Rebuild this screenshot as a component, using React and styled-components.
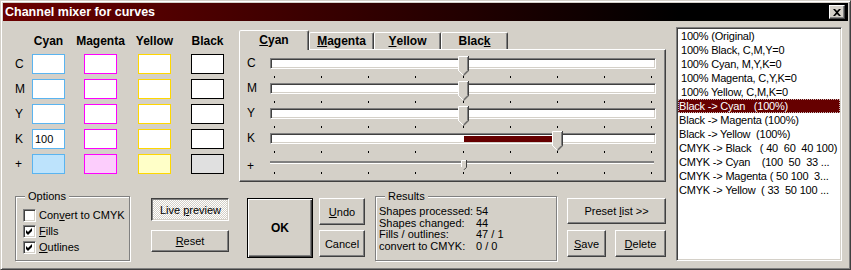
import React from "react";
import styled, { createGlobalStyle, css } from "styled-components";

const GlobalStyle = createGlobalStyle`
  html, body { margin: 0; padding: 0; background: #d4d0c8; }
  body {
    font-family: "Liberation Sans", Arial, sans-serif;
    font-size: 11px;
    color: #000;
  }
  * { box-sizing: border-box; }
`;

const raised = css`
  border: 1px solid;
  border-color: #fff #404040 #404040 #fff;
  box-shadow: inset -1px -1px #808080;
`;

const sunken = css`
  border: 1px solid;
  border-color: #808080 #fff #fff #808080;
  box-shadow: inset 1px 1px #404040, inset -1px -1px #d4d0c8;
`;

const Window = styled.div`
  width: 851px;
  height: 270px;
  background: #d4d0c8;
  border: 1px solid;
  border-color: #d4d0c8 #404040 #404040 #d4d0c8;
  box-shadow: inset 1px 1px #fff, inset -1px -1px #808080;
  padding: 2px;
  display: flex;
  flex-direction: column;
`;

const TitleBar = styled.div`
  height: 18px;
  flex: none;
  display: flex;
  align-items: center;
  justify-content: space-between;
  padding: 0 3px 0 2px;
  background: linear-gradient(to right, #6b0000, #000 80%);
  color: #fff;
  font-weight: bold;
  font-size: 12.5px;
`;

const CloseButton = styled.div`
  ${raised};
  width: 16px;
  height: 14px;
  background: #d4d0c8;
  display: flex;
  align-items: center;
  justify-content: center;
`;

const Body = styled.div`
  flex: 1;
  display: flex;
`;

const LeftPane = styled.div`
  width: 673px;
  display: flex;
  flex-direction: column;
`;

const TopRow = styled.div`
  height: 162px;
  display: flex;
  align-items: flex-start;
`;

/* ---------- mixer grid ---------- */

const MixerGrid = styled.div`
  margin: 10px 0 0 12px;
  display: grid;
  grid-template-columns: 17px 52px 54px 53px 33px;
  grid-template-rows: 23px repeat(5, 25px);
  align-items: start;
`;

const ColHead = styled.div`
  width: 33px;
  display: flex;
  justify-content: center;
  white-space: nowrap;
  font-weight: bold;
  font-size: 12px;
  line-height: 20px;
`;

const RowLabel = styled.div`
  font-size: 12px;
  line-height: 20px;
`;

const ColorBox = styled.div`
  width: 33px;
  height: 20px;
  border: 1px solid ${(p) => p.$border};
  background: ${(p) => p.$fill || "#fff"};
  padding-left: 2px;
  line-height: 18px;
  font-size: 11px;
`;

/* ---------- tabs & sliders ---------- */

const TabArea = styled.div`
  margin: 9px 0 0 15px;
  display: flex;
  flex-direction: column;
`;

const TabStrip = styled.div`
  height: 19px;
  display: flex;
  align-items: flex-end;
`;

const Tab = styled.div`
  width: ${(p) => p.$w}px;
  height: ${(p) => (p.$active ? 20 : 17)}px;
  margin-bottom: ${(p) => (p.$active ? -1 : 0)}px;
  position: relative;
  z-index: ${(p) => (p.$active ? 1 : 0)};
  background: #d4d0c8;
  border: 1px solid;
  border-bottom: none;
  border-color: #fff #404040 transparent #fff;
  border-radius: 2px 2px 0 0;
  box-shadow: inset -1px 0 #808080;
  display: flex;
  justify-content: center;
  padding-top: ${(p) => (p.$active ? 2 : 1)}px;
  font-weight: bold;
  font-size: 12px;
  line-height: 14px;
`;

const TabPanel = styled.div`
  ${raised};
  width: 427px;
  height: 133px;
  padding: 8px 9px 0 7px;
`;

const SliderRow = styled.div`
  height: 25px;
  display: flex;
  align-items: flex-start;
`;

const SliderLabel = styled.div`
  width: 23px;
  font-size: 12px;
  line-height: ${(p) => (p.$thin ? 17 : 11)}px;
`;

const SliderBody = styled.div`
  position: relative;
  width: 386px;
  height: 25px;
`;

const Track = styled.div`
  ${sunken};
  height: 11px;
  background: #fff;
`;

const ThinTrack = styled.div`
  margin-top: 3px;
  width: 384px;
  height: 3px;
  background: #808080;
  border-bottom: 1px solid #fff;
`;

const Ticks = styled.div`
  display: flex;
  justify-content: space-between;
  padding: 0 4px;
  margin-top: ${(p) => (p.$thin ? 8 : 7)}px;
`;

const Tick = styled.span`
  width: 1px;
  height: 2px;
  background: #000;
`;

const Fill = styled.div`
  position: absolute;
  top: 3px;
  height: 6px;
  background: #660000;
`;

const Thumb = styled.svg`
  position: absolute;
  top: ${(p) => (p.$thin ? 2 : -2)}px;
`;

/* ---------- bottom ---------- */

const BottomRow = styled.div`
  display: flex;
  align-items: flex-start;
`;

const GroupBox = styled.div`
  position: relative;
  margin: 13px 0 0 ${(p) => p.$ml}px;
  width: ${(p) => p.$w}px;
  height: 65px;
  border: 1px solid #808080;
  box-shadow: inset 1px 1px #fff, 1px 1px #fff;
  padding: ${(p) => p.$pad};
`;

const Legend = styled.span`
  position: absolute;
  top: -7px;
  left: 9px;
  padding: 0 3px;
  background: #d4d0c8;
  line-height: 13px;
`;

const CheckRow = styled.label`
  height: 16px;
  display: flex;
  align-items: flex-start;
  gap: 3px;
  line-height: 13px;
`;

const CheckBox = styled.span`
  ${sunken};
  width: 13px;
  height: 13px;
  background: #fff;
  display: flex;
  align-items: center;
  justify-content: center;
`;

const ButtonCol = styled.div`
  margin: 15px 0 0 ${(p) => p.$ml}px;
  width: ${(p) => p.$w}px;
  display: flex;
  flex-direction: column;
  gap: ${(p) => p.$gap}px;
`;

const Button = styled.div`
  width: ${(p) => (p.$w ? `${p.$w}px` : "100%")};
  height: ${(p) => p.$h}px;
  background: #d4d0c8;
  ${raised};
  display: flex;
  align-items: center;
  justify-content: center;
  font-size: 11px;
  white-space: pre;

  ${(p) =>
    p.$default &&
    css`
      border: 1px solid #000;
      box-shadow: inset 1px 1px #fff, inset -1px -1px #404040, inset -2px -2px #808080;
      font-weight: bold;
      font-size: 12px;
    `}

  ${(p) =>
    p.$pressed &&
    css`
      border-color: #404040 #fff #fff #404040;
      box-shadow: inset 1px 1px #808080, inset -1px -1px #d4d0c8;
      background: repeating-conic-gradient(#fff 0 25%, #d4d0c8 0 50%) 0 0 / 2px 2px;
      padding: 1px 0 0 1px;
    `}
`;

const BigButton = styled(Button)`
  margin: 15px 0 0 18px;
`;

const ButtonRow = styled.div`
  display: flex;
  justify-content: space-between;
`;

const ResultGrid = styled.div`
  display: grid;
  grid-template-columns: 97px auto;
  line-height: 11.7px;
  white-space: pre;
`;

const ListBox = styled.div`
  ${sunken};
  margin-top: 6px;
  width: 166px;
  height: 234px;
  background: #fff;
  padding: 1px;
  overflow: hidden;
`;

const ListItem = styled.div`
  height: 14px;
  line-height: 14px;
  padding-left: ${(p) => (p.$late ? 1 : 3)}px;
  letter-spacing: -0.2px;
  white-space: pre;
  overflow: hidden;
  ${(p) =>
    p.$active &&
    css`
      background: #660000;
      color: #fff;
      outline: 1px dotted #c8b8b8;
      outline-offset: -1px;
    `}
`;

const U = styled.span`
  text-decoration: underline;
`;

/* ---------- data ---------- */

const columns = [
  { name: "Cyan", border: "#5ab4f0", fill: "#bde3fc" },
  { name: "Magenta", border: "#ff00ff", fill: "#fccdfc" },
  { name: "Yellow", border: "#ffd800", fill: "#ffffc8" },
  { name: "Black", border: "#000", fill: "#e0e0e0" },
];

const rows = ["C", "M", "Y", "K"];

const tabs = [
  { key: "C", rest: "yan", w: 70, active: true },
  { key: "M", rest: "agenta", w: 65 },
  { key: "Y", rest: "ellow", w: 67 },
  { pre: "Blac", key: "k", rest: "", w: 67 },
];

const sliders = [
  { label: "C", value: 0 },
  { label: "M", value: 0 },
  { label: "Y", value: 0 },
  { label: "K", value: 50 },
  { label: "+", value: 0, thin: true },
];

const presets = [
  "100% (Original)",
  "100% Black, C,M,Y=0",
  "100% Cyan, M,Y,K=0",
  "100% Magenta, C,Y,K=0",
  "100% Yellow, C,M,K=0",
  "Black -> Cyan   (100%)",
  "Black -> Magenta (100%)",
  "Black -> Yellow  (100%)",
  "CMYK -> Black   ( 40  60  40 100)",
  "CMYK -> Cyan    (100  50  33 ...",
  "CMYK -> Magenta ( 50 100  3...",
  "CMYK -> Yellow  ( 33  50 100 ...",
];

const results = [
  ["Shapes processed:", "54"],
  ["Shapes changed:", "44"],
  ["Fills / outlines:", "47 / 1"],
  ["convert to CMYK:", "0 / 0"],
];

const pos = (v) => Math.round(4 + ((v + 100) / 200) * 377);

const BigThumb = ({ x }) => (
  <Thumb width="11" height="20" viewBox="0 0 11 20" style={{ left: x - 5 }}>
    <polygon points="0,0 11,0 11,15 5.5,20 0,15" fill="#d4d0c8" />
    <path d="M0.5 15 V0.5 H10" stroke="#fff" fill="none" />
    <path d="M0.5 14.5 L5.5 19.5" stroke="#fff" fill="none" />
    <path d="M10.5 0 V14.8 L5.5 19.8" stroke="#404040" fill="none" />
    <path d="M9.5 1 V14.4 L5.5 18.4" stroke="#808080" fill="none" />
  </Thumb>
);

const SmallThumb = ({ x }) => (
  <Thumb $thin width="6" height="10" viewBox="0 0 6 10" style={{ left: x - 2 }}>
    <polygon points="0,0 6,0 6,7 3,10 0,7" fill="#d4d0c8" />
    <path d="M0.5 7 V0.5 H5" stroke="#fff" fill="none" />
    <path d="M5.5 0 V7.3 L3 9.8" stroke="#404040" fill="none" />
  </Thumb>
);

const Check = ({ on }) => (
  <CheckBox>
    {on && (
      <svg width="7" height="7" viewBox="0 0 7 7">
        <path d="M0 2 L2 4 L6 0 V3 L2 7 L0 5 Z" fill="#000" />
      </svg>
    )}
  </CheckBox>
);

export default function App() {
  return (
    <>
      <GlobalStyle />
      <Window>
        <TitleBar>
          <span>Channel mixer for curves</span>
          <CloseButton>
            <svg width="8" height="7" viewBox="0 0 8 7">
              <path d="M0 0 H2 L4 2 L6 0 H8 L5 3.5 L8 7 H6 L4 5 L2 7 H0 L3 3.5 Z" fill="#000" />
            </svg>
          </CloseButton>
        </TitleBar>

        <Body>
          <LeftPane>
            <TopRow>
              <MixerGrid>
                <span />
                {columns.map((c) => (
                  <ColHead key={c.name}>{c.name}</ColHead>
                ))}
                {rows.map((r) => (
                  <React.Fragment key={r}>
                    <RowLabel>{r}</RowLabel>
                    {columns.map((c) => (
                      <ColorBox key={c.name} $border={c.border}>
                        {r === "K" && c.name === "Cyan" ? "100" : ""}
                      </ColorBox>
                    ))}
                  </React.Fragment>
                ))}
                <RowLabel>+</RowLabel>
                {columns.map((c) => (
                  <ColorBox key={c.name} $border={c.border} $fill={c.fill} />
                ))}
              </MixerGrid>

              <TabArea>
                <TabStrip>
                  {tabs.map((t) => (
                    <Tab key={t.key} $w={t.w} $active={t.active}>
                      {t.pre}
                      <U>{t.key}</U>
                      {t.rest}
                    </Tab>
                  ))}
                </TabStrip>
                <TabPanel>
                  {sliders.map((s) => {
                    const x = pos(s.value);
                    const zero = pos(0);
                    return (
                      <SliderRow key={s.label}>
                        <SliderLabel $thin={s.thin}>{s.label}</SliderLabel>
                        <SliderBody>
                          {s.thin ? <ThinTrack /> : <Track />}
                          <Ticks $thin={s.thin}>
                            {Array.from({ length: 9 }).map((_, i) => (
                              <Tick key={i} />
                            ))}
                          </Ticks>
                          {s.value > 0 && (
                            <Fill style={{ left: zero + 1, width: x - 5 - zero - 1 }} />
                          )}
                          {s.thin ? <SmallThumb x={x} /> : <BigThumb x={x} />}
                        </SliderBody>
                      </SliderRow>
                    );
                  })}
                </TabPanel>
              </TabArea>
            </TopRow>

            <BottomRow>
              <GroupBox $ml={12} $w={115} $pad="12px 0 0 7px">
                <Legend>Options</Legend>
                <CheckRow>
                  <Check />
                  <span>
                    Con<U>v</U>ert to CMYK
                  </span>
                </CheckRow>
                <CheckRow>
                  <Check on />
                  <span>
                    <U>F</U>ills
                  </span>
                </CheckRow>
                <CheckRow>
                  <Check on />
                  <span>
                    <U>O</U>utlines
                  </span>
                </CheckRow>
              </GroupBox>

              <ButtonCol $ml={21} $w={78} $gap={9}>
                <Button $h={23} $pressed>
                  Live <U>p</U>review
                </Button>
                <Button $h={22}>
                  <U>R</U>eset
                </Button>
              </ButtonCol>

              <BigButton $w={66} $h={60} $default>
                OK
              </BigButton>

              <ButtonCol $ml={6} $w={46} $gap={5}>
                <Button $h={27}>
                  <U>U</U>ndo
                </Button>
                <Button $h={27}>Cancel</Button>
              </ButtonCol>

              <GroupBox $ml={10} $w={182} $pad="9px 0 0 3px">
                <Legend>Results</Legend>
                <ResultGrid>
                  {results.map(([k, v]) => (
                    <React.Fragment key={k}>
                      <span>{k}</span>
                      <span>{v}</span>
                    </React.Fragment>
                  ))}
                </ResultGrid>
              </GroupBox>

              <ButtonCol $ml={10} $w={99} $gap={6}>
                <Button $h={26}>
                  Preset <U>l</U>ist &gt;&gt;
                </Button>
                <ButtonRow>
                  <Button $w={39} $h={27}>
                    <U>S</U>ave
                  </Button>
                  <Button $w={51} $h={27}>
                    <U>D</U>elete
                  </Button>
                </ButtonRow>
              </ButtonCol>
            </BottomRow>
          </LeftPane>

          <ListBox>
            {presets.map((p, i) => (
              <ListItem key={i} $active={i === 5} $late={i >= 5}>
                {p}
              </ListItem>
            ))}
          </ListBox>
        </Body>
      </Window>
    </>
  );
}
